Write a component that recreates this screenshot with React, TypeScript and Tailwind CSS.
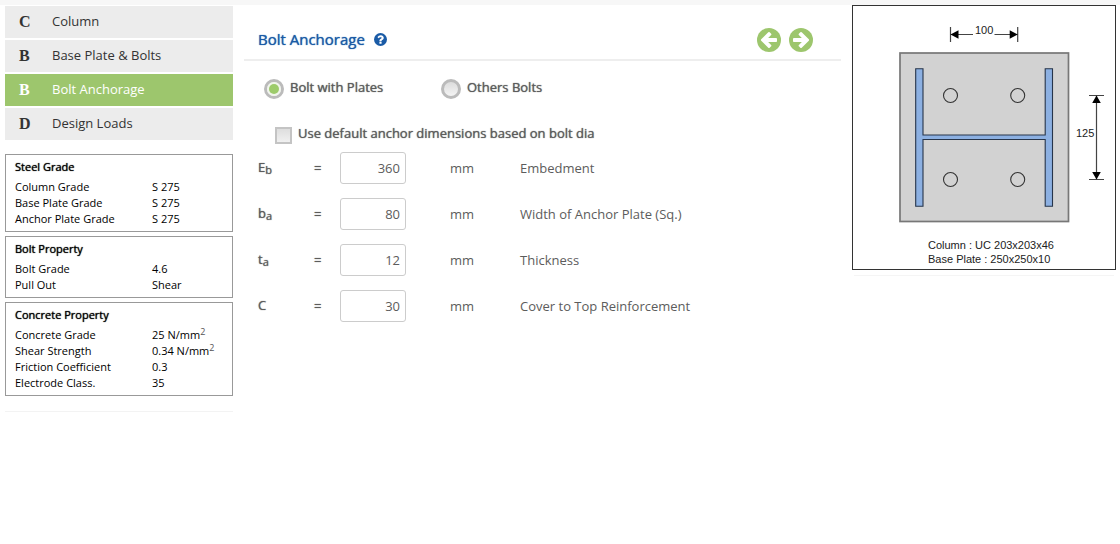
import { useState } from "react";
import type { ReactNode } from "react";

const steps = [
  { letter: "C", label: "Column" },
  { letter: "B", label: "Base Plate & Bolts" },
  { letter: "B", label: "Bolt Anchorage" },
  { letter: "D", label: "Design Loads" },
];

function PerMm2({ value }: { value: string }) {
  return (
    <>
      {value} N/mm<sup className="text-[9px] text-[#555]">2</sup>
    </>
  );
}

const panels: { title: string; rows: [string, ReactNode][] }[] = [
  {
    title: "Steel Grade",
    rows: [
      ["Column Grade", "S 275"],
      ["Base Plate Grade", "S 275"],
      ["Anchor Plate Grade", "S 275"],
    ],
  },
  {
    title: "Bolt Property",
    rows: [
      ["Bolt Grade", "4.6"],
      ["Pull Out", "Shear"],
    ],
  },
  {
    title: "Concrete Property",
    rows: [
      ["Concrete Grade", <PerMm2 value="25" />],
      ["Shear Strength", <PerMm2 value="0.34" />],
      ["Friction Coefficient", "0.3"],
      ["Electrode Class.", "35"],
    ],
  },
];

const fields = [
  { id: "eb", symbol: "E", sub: "b", value: "360", text: "Embedment" },
  { id: "ba", symbol: "b", sub: "a", value: "80", text: "Width of Anchor Plate (Sq.)" },
  { id: "ta", symbol: "t", sub: "a", value: "12", text: "Thickness" },
  { id: "c", symbol: "C", sub: "", value: "30", text: "Cover to Top Reinforcement" },
];

function ArrowIcon({ left = false }: { left?: boolean }) {
  return (
    <svg viewBox="0 -128 1536 1536" className={left ? "size-6 -scale-x-100" : "size-6"} aria-hidden="true">
      <circle cx="768" cy="640" r="768" fill="#9dc66d" />
      <path
        fill="#fff"
        d="M1285 640q0 27-18 45l-453 453q-18 18-45 18t-45-18l-91-91q-18-18-18-45t18-45l189-189H320q-26 0-45-19t-19-45V576q0-26 19-45t45-19h502L633 323q-19-19-19-45t19-45l91-91q18-18 45-18t45 18l453 453q18 18 18 45z"
      />
    </svg>
  );
}

function HelpIcon() {
  return (
    <svg viewBox="0 -128 1536 1536" className="size-[13px]" aria-hidden="true">
      <circle cx="768" cy="640" r="768" fill="currentColor" />
      <path
        fill="#fff"
        transform="matrix(1 0 0 -1 0 1280)"
        d="M896 160v192q0 14 -9 23t-23 9h-192q-14 0 -23 -9t-9 -23v-192q0 -14 9 -23t23 -9h192q14 0 23 9t9 23zM1152 832q0 88 -55.5 163t-138.5 116t-170 41q-243 0 -371 -213q-15 -24 8 -42l132 -100q7 -6 19 -6q16 0 25 12q53 68 86 92q34 24 86 24q48 0 85.5 -26t37.5 -59q0 -38 -20 -61t-68 -45q-63 -28 -115.5 -86.5t-52.5 -125.5v-36q0 -14 9 -23t23 -9h192q14 0 23 9t9 23q0 19 21.5 49.5t54.5 49.5q32 18 49 28.5t46 35t44.5 48t28 60.5t12.5 81z"
      />
    </svg>
  );
}

function Sidebar() {
  return (
    <aside className="w-[228px] shrink-0">
      <nav className="flex flex-col gap-0.5 pt-px">
        {steps.map((step, i) => (
          <a
            key={step.label}
            href="#"
            aria-current={i === 2 ? "step" : undefined}
            className={
              i === 2
                ? "flex h-8 items-center bg-[#9dc66d] pl-3.5 text-[13px] text-white"
                : "flex h-8 items-center bg-[#ececec] pl-3.5 text-[13px] text-[#333]"
            }
          >
            <span className="w-[33px] font-['Liberation_Serif',serif] text-base font-bold">{step.letter}</span>
            {step.label}
          </a>
        ))}
      </nav>
      <div className="mt-3.5 flex flex-col gap-1">
        {panels.map((panel) => (
          <section key={panel.title} className="border border-[#999] pb-1 pl-[9px] text-[11px] text-black">
            <h2 className="leading-6 [text-shadow:0_0_1px_currentColor]">{panel.title}</h2>
            <table className="w-full table-fixed">
              <tbody>
                {panel.rows.map(([name, value]) => (
                  <tr key={name} className="h-4 leading-4">
                    <th scope="row" className="w-[137px] p-0 text-left font-normal">
                      {name}
                    </th>
                    <td className="p-0">{value}</td>
                  </tr>
                ))}
              </tbody>
            </table>
          </section>
        ))}
      </div>
      <hr className="mt-[15px] border-[#f3f3f3]" />
    </aside>
  );
}

function Radio({ label, checked, onChange }: { label: string; checked: boolean; onChange: () => void }) {
  return (
    <label className="flex items-start gap-1.5 text-[13px] leading-4 [text-shadow:0_0_1px_currentColor]">
      <span className="grid size-5 place-items-center">
        <input
          type="radio"
          name="anchor"
          checked={checked}
          onChange={onChange}
          className="col-start-1 row-start-1 size-5 appearance-none rounded-full border-[3px] border-[#bbb] bg-linear-to-b from-[#dcdcdc] to-[#f4f4f4]"
        />
        {checked && (
          <span className="pointer-events-none col-start-1 row-start-1 size-2.5 rounded-full bg-[#9dcb6b] ring-2 ring-[#f1f5ec]" />
        )}
      </span>
      {label}
    </label>
  );
}

function Anchorage() {
  const [kind, setKind] = useState("plates");
  return (
    <main className="min-w-0 flex-1 text-[#5c5c5c]">
      <header className="flex h-14 items-center justify-between border-b-2 border-[#eee] pt-[15px] pr-7 pl-3.5">
        <h1 className="flex items-center gap-[9px] text-[15px] text-[#1a5ba6] [text-shadow:0_0_1px_currentColor]">
          Bolt Anchorage
          <a href="#" aria-label="Help">
            <HelpIcon />
          </a>
        </h1>
        <div className="flex gap-2">
          <button type="button" aria-label="Previous">
            <ArrowIcon left />
          </button>
          <button type="button" aria-label="Next">
            <ArrowIcon />
          </button>
        </div>
      </header>
      <form className="pl-3.5">
        <div className="flex pt-[18px] pl-1.5">
          <div className="w-[177px]">
            <Radio label="Bolt with Plates" checked={kind === "plates"} onChange={() => setKind("plates")} />
          </div>
          <Radio label="Others Bolts" checked={kind === "others"} onChange={() => setKind("others")} />
        </div>
        <label className="mt-[26px] flex h-[27px] items-start gap-1.5 pl-[17px] text-[13px] leading-4 [text-shadow:0_0_1px_currentColor]">
          <input
            type="checkbox"
            className="mt-0.5 size-[17px] appearance-none border-2 border-[#c4c4c4] bg-linear-to-b from-[#dedede] to-[#f0f0f0] checked:from-[#9dcb6b] checked:to-[#9dcb6b]"
          />
          Use default anchor dimensions based on bolt dia
        </label>
        <div className="flex flex-col gap-3.5 text-[13px]">
          {fields.map((f) => (
            <div key={f.id} className="flex h-8 items-center">
              <label htmlFor={f.id} className="w-14 [text-shadow:0_0_1px_currentColor]">
                {f.symbol}
                {f.sub && <sub className="bottom-[-2px] text-[11px]">{f.sub}</sub>}
              </label>
              <span className="w-[26px] pt-px [text-shadow:0_0_1px_currentColor]">=</span>
              <input
                id={f.id}
                defaultValue={f.value}
                className="h-8 w-[66px] rounded-[3px] border border-[#ccc] pr-[5px] text-right"
              />
              <span className="ml-11 w-[70px] pt-px">mm</span>
              <span className="pt-px">{f.text}</span>
            </div>
          ))}
        </div>
      </form>
    </main>
  );
}

function PlateDrawing() {
  return (
    <aside className="w-[264px] shrink-0">
      <figure className="border border-[#333] pb-[3px]">
        <svg viewBox="853 6 262 232" className="block w-full" role="img" aria-label="Base plate plan">
          <rect x="900" y="53" width="168.5" height="168.5" fill="#d2d2d2" stroke="#777" strokeWidth="1.7" />
          <path
            d="M915.7 68.7h7.3v66.3h122.2V68.7h7.3v137.6h-7.3V139.5H923v66.8h-7.3z"
            fill="#8cb0e2"
            stroke="#26344a"
            strokeWidth="1.1"
          />
          <g fill="none" stroke="#333" strokeWidth="1.1">
            <circle cx="950.5" cy="95.5" r="7" />
            <circle cx="1017.7" cy="95.5" r="7" />
            <circle cx="950.5" cy="179.5" r="7" />
            <circle cx="1017.7" cy="179.5" r="7" />
          </g>
          <g stroke="#444" strokeWidth="1.2">
            <path d="M950.5 27v15M1017.7 27v15M951 34.5h22M994.5 34.5h23" />
            <path d="M1089 95.5h15M1089 179.5h15M1096.5 96v83" />
          </g>
          <path
            d="M950.5 34.5l8-4.3v8.600zM1017.7 34.5l-8-4.3v8.600zM1096.5 95.5l-4.3 7.500h8.600zM1096.5 179.5l-4.3-7.500h8.600z"
            fill="#000"
          />
          <g fill="#222" fontFamily="Liberation Sans, sans-serif" fontSize="11">
            <text x="975" y="34">
              100
            </text>
            <text x="1076" y="137">
              125
            </text>
          </g>
        </svg>
        <figcaption className="pl-[75px] font-['Liberation_Sans',sans-serif] text-[11px] leading-3.5 text-[#222]">
          Column : UC 203x203x46
          <br />
          Base Plate : 250x250x10
        </figcaption>
      </figure>
      <hr className="mx-0.5 mt-[5px] border-[#f5f5f5]" />
    </aside>
  );
}

export default function App() {
  return (
    <div className="min-h-screen bg-white font-['Open_Sans',sans-serif]">
      <div className="h-[5px] bg-[#f7f7f7]" />
      <div className="flex gap-[11px] pr-1 pl-[5px]">
        <Sidebar />
        <Anchorage />
        <PlateDrawing />
      </div>
    </div>
  );
}
